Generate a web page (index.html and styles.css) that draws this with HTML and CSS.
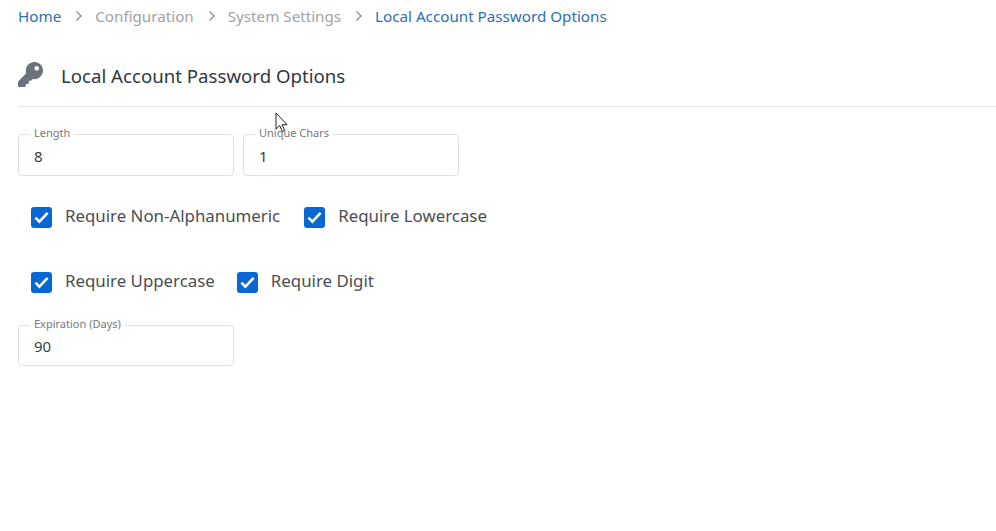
FILE: index.html
```html
<!DOCTYPE html>
<html lang="en">
<head>
<meta charset="utf-8">
<title>Local Account Password Options</title>
<link rel="stylesheet" href="styles.css">
</head>
<body>
<nav class="crumbs">
  <a class="crumb link">Home</a>
  <svg class="chev" viewBox="0 0 8 12"><path d="M1.500 1.500 6 6l-4.500 4.500"/></svg>
  <span class="crumb">Configuration</span>
  <svg class="chev" viewBox="0 0 8 12"><path d="M1.500 1.500 6 6l-4.500 4.500"/></svg>
  <span class="crumb">System Settings</span>
  <svg class="chev" viewBox="0 0 8 12"><path d="M1.500 1.500 6 6l-4.500 4.500"/></svg>
  <a class="crumb link">Local Account Password Options</a>
</nav>
<header class="title">
  <svg class="key" viewBox="0 0 512 512"><path d="M512 176.001C512 273.203 433.202 352 336 352c-11.220 0-22.190-1.062-32.827-3.069l-24.012 27.014A23.999 23.999 0 0 1 261.223 384H224v40c0 13.255-10.745 24-24 24h-40v40c0 13.255-10.745 24-24 24H24c-13.255 0-24-10.745-24-24v-78.059c0-6.365 2.529-12.470 7.029-16.971l161.802-161.802C163.108 213.814 160 195.271 160 176 160 78.798 238.797.001 335.999 0 433.488-.001 512 78.511 512 176.001zM336 128c0 26.510 21.490 48 48 48s48-21.490 48-48-21.490-48-48-48-48 21.490-48 48z"/></svg>
  <h1>Local Account Password Options</h1>
</header>
<form class="form">
  <div class="fields">
    <fieldset class="field"><legend>Length</legend><span class="value">8</span></fieldset>
    <fieldset class="field"><legend>Unique Chars</legend><span class="value">1</span></fieldset>
  </div>
  <div class="checks first">
    <label class="check"><span class="box"><svg viewBox="0 0 20 20"><path d="M4.200 10.200 8 14 15.800 5.600"/></svg></span><span class="text">Require Non-Alphanumeric</span></label>
    <label class="check"><span class="box"><svg viewBox="0 0 20 20"><path d="M4.200 10.200 8 14 15.800 5.600"/></svg></span><span class="text">Require Lowercase</span></label>
  </div>
  <div class="checks second">
    <label class="check"><span class="box"><svg viewBox="0 0 20 20"><path d="M4.200 10.200 8 14 15.800 5.600"/></svg></span><span class="text">Require Uppercase</span></label>
    <label class="check"><span class="box"><svg viewBox="0 0 20 20"><path d="M4.200 10.200 8 14 15.800 5.600"/></svg></span><span class="text">Require Digit</span></label>
  </div>
  <div class="fields last">
    <fieldset class="field"><legend>Expiration (Days)</legend><span class="value">90</span></fieldset>
  </div>
</form>
<svg class="cursor" viewBox="0 0 14 21"><path d="M1 1v16l3.700-3.500 2.600 6 2.400-1-2.600-5.800H12z"/></svg>
</body>
</html>
```
FILE: styles.css
```css
* { box-sizing: border-box; }
html, body { margin: 0; padding: 0; }
body {
  width: 996px;
  height: 531px;
  overflow: hidden;
  background: #fff;
  font-family: "Noto Sans", "Open Sans", sans-serif;
  color: #32363a;
  position: relative;
}
.crumbs {
  display: flex;
  align-items: center;
  height: 32px;
  padding-left: 18px;
  font-size: 15.200px;
  color: #a0a3a6;
}
.link { color: #2b6fb8; }
.chev {
  width: 8px;
  height: 12px;
  margin: 0 12px 0 14px;
  fill: none;
  stroke: #8d9194;
  stroke-width: 1.300;
}
.title {
  display: flex;
  align-items: center;
  height: 75px;
  margin-left: 18px;
  border-bottom: 1px solid #e3e5e7;
  padding-top: 13px;
}
.key { width: 25px; height: 25px; fill: #6c727a; margin-top: -2px; }
h1 {
  margin: 0 0 0 18px;
  font-size: 18.650px;
  font-weight: 400;
  color: #32373b;
}
.form { padding: 27px 0 0 18px; }
.fields { display: flex; gap: 9px; }
.field {
  width: 216px;
  height: 50px;
  margin: -8px 0 0;
  padding: 4px 15px 0;
  border: 1px solid #dfe2e5;
  border-radius: 4px;
}
legend {
  padding: 0 4px 2px;
  margin-left: -4px;
  font-size: 11px;
  line-height: 14px;
  color: #75797d;
}
.value { font-size: 15px; line-height: 20px; color: #3a3d40; display: block; }
.checks { display: flex; padding-left: 13px; }
.checks.first { margin-top: 31px; gap: 24px; }
.checks.second { margin-top: 44px; gap: 22px; }
.fields.last { margin-top: 32px; }
.fields.last .field { height: 49px; padding-top: 3px; }
.check { display: flex; align-items: center; height: 21px; font-size: 16.850px; color: #4a4e52; }
.text { padding-bottom: 5px; }
.box {
  width: 21px;
  height: 21px;
  margin-right: 13px;
  background: #0767d3;
  border-radius: 3px;
  display: flex;
}
.box svg { width: 21px; height: 21px; fill: none; stroke: #fff; stroke-width: 2.400; }
.cursor {
  position: absolute;
  left: 275px;
  top: 112px;
  width: 14px;
  height: 21px;
  fill: #fff;
  stroke: #222;
  stroke-width: 1;
}
```
